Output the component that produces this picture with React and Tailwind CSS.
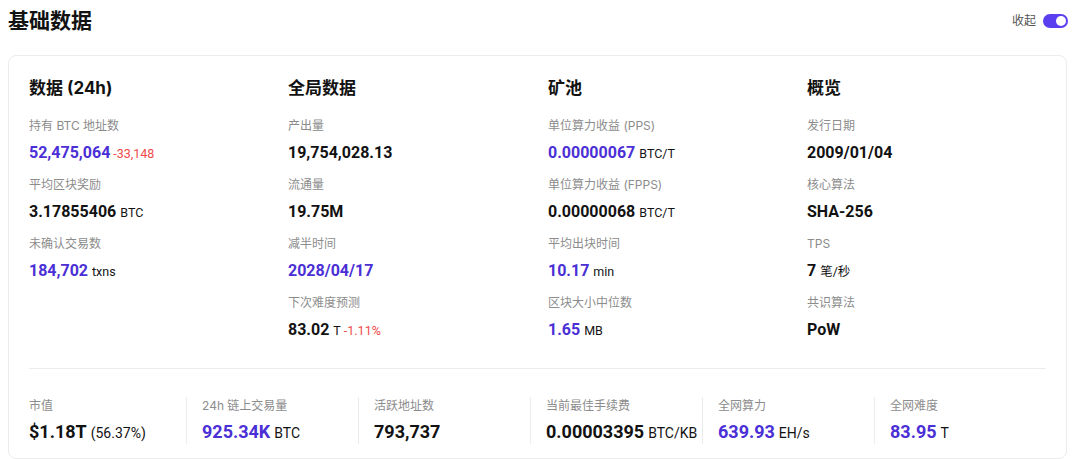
import React from 'react';

const PURPLE = 'text-[#4b2fd6]';

const sections = [
  {
    title: '数据 (24h)',
    items: [
      { label: '持有 BTC 地址数', value: '52,475,064', color: PURPLE, change: '-33,148' },
      { label: '平均区块奖励', value: '3.17855406', unit: 'BTC' },
      { label: '未确认交易数', value: '184,702', color: PURPLE, unit: 'txns' },
    ],
  },
  {
    title: '全局数据',
    items: [
      { label: '产出量', value: '19,754,028.13' },
      { label: '流通量', value: '19.75M' },
      { label: '减半时间', value: '2028/04/17', color: PURPLE },
      { label: '下次难度预测', value: '83.02', unit: 'T', change: '-1.11%' },
    ],
  },
  {
    title: '矿池',
    items: [
      { label: '单位算力收益 (PPS)', value: '0.00000067', color: PURPLE, unit: 'BTC/T' },
      { label: '单位算力收益 (FPPS)', value: '0.00000068', unit: 'BTC/T' },
      { label: '平均出块时间', value: '10.17', color: PURPLE, unit: 'min' },
      { label: '区块大小中位数', value: '1.65', color: PURPLE, unit: 'MB' },
    ],
  },
  {
    title: '概览',
    items: [
      { label: '发行日期', value: '2009/01/04' },
      { label: '核心算法', value: 'SHA-256' },
      { label: 'TPS', value: '7', unit: '笔/秒' },
      { label: '共识算法', value: 'PoW' },
    ],
  },
];

const summary = [
  { label: '市值', value: '$1.18T', unit: '(56.37%)' },
  { label: '24h 链上交易量', value: '925.34K', color: PURPLE, unit: 'BTC' },
  { label: '活跃地址数', value: '793,737' },
  { label: '当前最佳手续费', value: '0.00003395', unit: 'BTC/KB' },
  { label: '全网算力', value: '639.93', color: PURPLE, unit: 'EH/s' },
  { label: '全网难度', value: '83.95', color: PURPLE, unit: 'T' },
];

const num = "font-['Roboto','Noto_Sans_CJK_SC',sans-serif]";

const Value = ({ item }) => (
  <div className={`flex items-baseline h-[24px] leading-[24px] whitespace-nowrap ${num}`}>
    <span className={`text-[16px] font-bold ${item.color || 'text-[#121212]'}`}>{item.value}</span>
    {item.unit && <span className="ml-[4px] text-[12.5px] text-[#121212]">{item.unit}</span>}
    {item.change && <span className="ml-[3px] text-[12.5px] text-[#f0494c]">{item.change}</span>}
  </div>
);

export default function App() {
  return (
    <div className="w-[1080px] h-[459px] bg-white overflow-hidden font-['Inter','Noto_Sans_CJK_SC',sans-serif]">
      <div className="flex items-center justify-between h-[42px] pl-[8px] pr-[12px]">
        <h1 className="text-[21px] font-bold text-[#121212]">基础数据</h1>
        <div className="flex items-center gap-[7px]">
          <span className="text-[12px] text-[#555]">收起</span>
          <div className="relative w-[25px] h-[14px] rounded-full bg-[#5a3ff0]">
            <div className="absolute right-[2px] top-[2px] w-[10px] h-[10px] rounded-full bg-white" />
          </div>
        </div>
      </div>

      <div className="ml-[8px] mr-[13px] mt-[13px] border border-[#ececec] rounded-[8px] px-[20px] pt-[20px] pb-[14px]">
        <div className="grid grid-cols-[259px_260px_259px_1fr]">
          {sections.map((s) => (
            <div key={s.title}>
              <h2 className="text-[17px] font-bold text-[#121212] h-[24px] leading-[24px] mb-[17px]">{s.title}</h2>
              <div className="flex flex-col gap-[11px]">
                {s.items.map((it) => (
                  <div key={it.label} className="flex flex-col gap-[6px]">
                    <div className="text-[12px] h-[18px] leading-[18px] text-[#8c8c8c]">{it.label}</div>
                    <Value item={it} />
                  </div>
                ))}
              </div>
            </div>
          ))}
        </div>

        <div className="mt-[26px] border-t border-[#ececec]" />

        <div className="flex mt-[28px]">
          {summary.map((it, i) => (
            <div
              key={it.label}
              className={i === 0 ? 'w-[157px]' : 'w-[172px] border-l border-[#ececec] pl-[15px]'}
            >
              <div className="text-[12px] h-[18px] leading-[18px] text-[#8c8c8c]">{it.label}</div>
              <div className="mt-[5px]">
                <div className={`flex items-baseline h-[24px] leading-[24px] whitespace-nowrap ${num}`}>
                  <span className={`text-[18px] font-bold ${it.color || 'text-[#121212]'}`}>{it.value}</span>
                  <span className="ml-[4px] text-[14px] text-[#121212]">{it.unit}</span>
                </div>
              </div>
            </div>
          ))}
        </div>
      </div>
    </div>
  );
}
